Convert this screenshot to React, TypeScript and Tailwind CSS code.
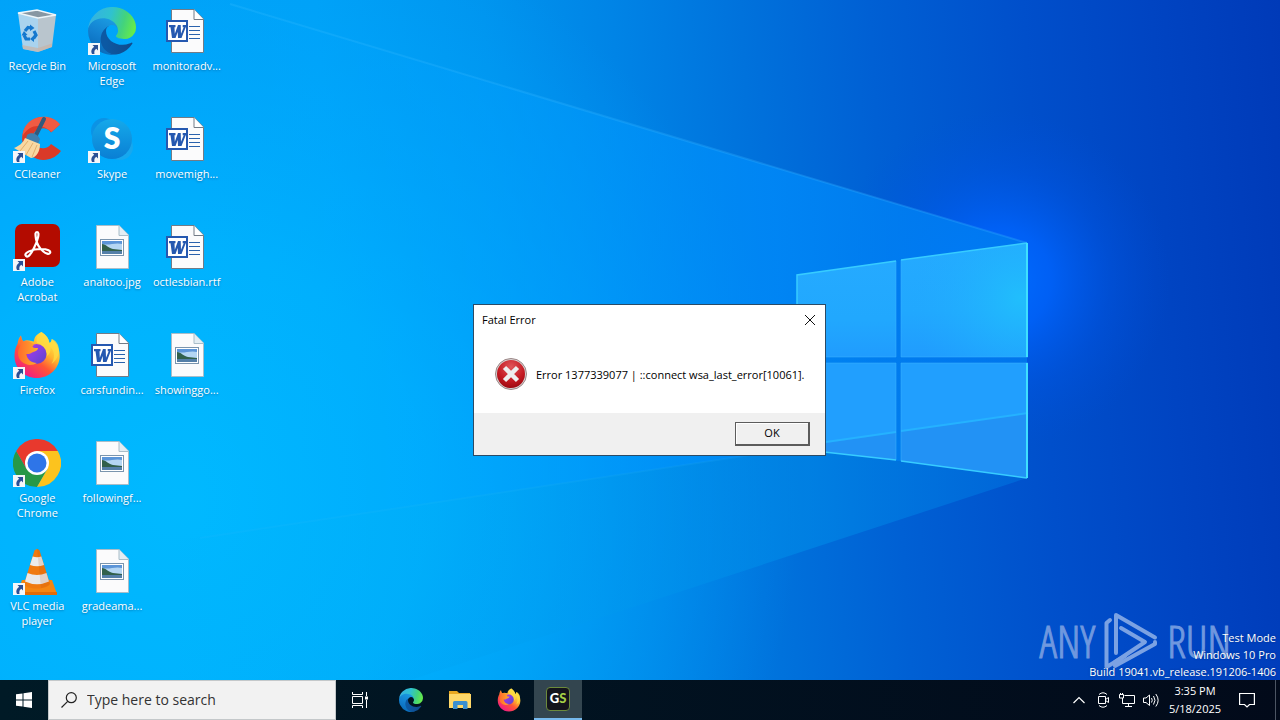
import React from "react";

type Kind = "bin" | "edge" | "word" | "ccleaner" | "skype" | "acrobat" | "jpg" | "firefox" | "chrome" | "vlc";

const desktopItems: { label: string; kind: Kind; shortcut?: boolean }[] = [
  { label: "Recycle Bin", kind: "bin" },
  { label: "CCleaner", kind: "ccleaner", shortcut: true },
  { label: "Adobe Acrobat", kind: "acrobat", shortcut: true },
  { label: "Firefox", kind: "firefox", shortcut: true },
  { label: "Google Chrome", kind: "chrome", shortcut: true },
  { label: "VLC media player", kind: "vlc", shortcut: true },
  { label: "Microsoft Edge", kind: "edge", shortcut: true },
  { label: "Skype", kind: "skype", shortcut: true },
  { label: "analtoo.jpg", kind: "jpg" },
  { label: "carsfundin...", kind: "word" },
  { label: "followingf...", kind: "jpg" },
  { label: "gradeama...", kind: "jpg" },
  { label: "monitoradv...", kind: "word" },
  { label: "movemigh...", kind: "word" },
  { label: "octlesbian.rtf", kind: "word" },
  { label: "showinggo...", kind: "jpg" },
];

function Wallpaper() {
  return (
    <svg className="absolute inset-0 h-full w-full" viewBox="0 0 1280 720" preserveAspectRatio="none" aria-hidden="true">
      <defs>
        <linearGradient id="base" gradientUnits="userSpaceOnUse" x1="0" y1="80" x2="1280" y2="0">
          <stop offset="0" stopColor="#00a2f8" />
          <stop offset=".25" stopColor="#00a0f6" />
          <stop offset=".38" stopColor="#0094ee" />
          <stop offset=".48" stopColor="#0084e6" />
          <stop offset=".58" stopColor="#0072dc" />
          <stop offset=".68" stopColor="#0060d4" />
          <stop offset=".8" stopColor="#004fcb" />
          <stop offset=".9" stopColor="#0044c2" />
          <stop offset="1" stopColor="#003ab8" />
        </linearGradient>
        <radialGradient id="cyan" gradientUnits="userSpaceOnUse" cx="180" cy="500" r="620">
          <stop offset="0" stopColor="#00b9ff" />
          <stop offset=".4" stopColor="#00b6ff" stopOpacity=".8" />
          <stop offset="1" stopColor="#00a4ff" stopOpacity="0" />
        </radialGradient>
        <radialGradient id="glow" gradientUnits="userSpaceOnUse" cx="1000" cy="280" r="170">
          <stop offset="0" stopColor="#006cff" />
          <stop offset=".3" stopColor="#0064ff" stopOpacity=".8" />
          <stop offset=".65" stopColor="#0058ec" stopOpacity=".35" />
          <stop offset="1" stopColor="#0050dc" stopOpacity="0" />
        </radialGradient>
        <linearGradient id="beam" gradientUnits="userSpaceOnUse" x1="200" y1="0" x2="1027" y2="0">
          <stop offset="0" stopColor="#00a8ff" stopOpacity="0" />
          <stop offset=".45" stopColor="#009cff" stopOpacity=".5" />
          <stop offset=".7" stopColor="#008cfc" stopOpacity=".75" />
          <stop offset="1" stopColor="#007cee" stopOpacity=".8" />
        </linearGradient>
        <linearGradient id="low" gradientUnits="userSpaceOnUse" x1="150" y1="0" x2="1027" y2="0">
          <stop offset="0" stopColor="#009ce8" stopOpacity="0" />
          <stop offset=".5" stopColor="#009cee" stopOpacity=".25" />
          <stop offset=".75" stopColor="#008ce8" stopOpacity=".6" />
          <stop offset="1" stopColor="#006cdc" stopOpacity=".7" />
        </linearGradient>
        <linearGradient id="ray" gradientUnits="userSpaceOnUse" x1="230" y1="0" x2="1027" y2="0">
          <stop offset="0" stopColor="#35bdff" stopOpacity=".25" />
          <stop offset="1" stopColor="#2fa8ff" stopOpacity=".35" />
        </linearGradient>
        <linearGradient id="pane" x1="0" x2="0" y1="0" y2="1">
          <stop offset="0" stopColor="#25aaff" />
          <stop offset=".6" stopColor="#21a8fe" />
          <stop offset="1" stopColor="#209cfe" />
        </linearGradient>
        <radialGradient id="shine" gradientUnits="userSpaceOnUse" cx="1020" cy="298" r="110">
          <stop offset="0" stopColor="#21befc" />
          <stop offset="1" stopColor="#21aaff" stopOpacity="0" />
        </radialGradient>
      </defs>
      <rect width="1280" height="720" fill="url(#base)" />
      <rect width="1280" height="720" fill="url(#cyan)" />
      <rect width="1280" height="720" fill="url(#glow)" />
      <path d="M230 4 1027 243V478L797 448 180 540V0Z" fill="url(#beam)" />
      <path d="M180 540 797 448 1027 478 380 690H180Z" fill="url(#low)" />
      <path d="M230 4 1027 243" stroke="url(#ray)" strokeWidth="2" />
      <path d="M200 538 797 448" stroke="#35bdff" strokeOpacity=".12" strokeWidth="2" />
      {/* window panes */}
      <path d="M797 275 896 261V357H797Z" fill="url(#pane)" />
      <path d="M901 260 1028 243V357H901Z" fill="url(#pane)" />
      <path d="M901 260 1028 243V357H901Z" fill="url(#shine)" />
      <path d="M797 363H896V460L797 449Z" fill="#219ffe" />
      <path d="M901 363H1028V478L901 461Z" fill="#219ffe" />
      <path d="M826 442 896 432V460L826 452ZM901 431 1028 413V478L901 461Z" fill="#2292f5" />
      <path d="M826 442 896 432M901 431 1028 413" stroke="#25b2ff" strokeWidth="2" />
      <path d="M896 261V357M901 260V357H1028M797 357H896M797 363H896V460M901 461V363H1028" fill="none" stroke="#3db6ff" strokeOpacity=".5" />
      <path d="M797 357V275L896 261M901 260 1027 243M901 461 1027 478M797 449 896 460" fill="none" stroke="#37ccff" strokeWidth="1.5" />
      <path d="M1027 243V357M1027 363V478" stroke="#3fe0ff" strokeWidth="2" />
    </svg>
  );
}

function EdgeArt() {
  return (
    <svg viewBox="0 0 256 256" className="h-full w-full" aria-hidden="true">
      <defs>
        <linearGradient id="e1" x1=".2" x2="1" y1=".5" y2=".5">
          <stop offset="0" stopColor="#0c59a4" />
          <stop offset="1" stopColor="#114a8b" />
        </linearGradient>
        <linearGradient id="e2" x1=".6" x2=".2" y1="0" y2="1">
          <stop offset="0" stopColor="#1b9de2" />
          <stop offset=".5" stopColor="#1380d0" />
          <stop offset="1" stopColor="#0667b5" />
        </linearGradient>
        <linearGradient id="e3" x1="0" x2="1" y1=".3" y2=".5">
          <stop offset="0" stopColor="#35b0e4" />
          <stop offset=".45" stopColor="#2fc2cf" />
          <stop offset=".75" stopColor="#43d37c" />
          <stop offset="1" stopColor="#66eb4a" />
        </linearGradient>
      </defs>
      <g transform="translate(-4.63 -4.92)">
        <path fill="url(#e1)" d="M235.68 195.46a93.73 93.73 0 01-10.54 4.71 101.87 101.87 0 01-35.9 6.46c-47.32 0-88.54-32.55-88.54-74.32A31.48 31.48 0 01117.13 105c-42.8 1.8-53.8 46.4-53.8 72.53 0 73.88 68.09 81.37 82.76 81.37 7.91 0 19.84-2.3 27-4.56l1.31-.44a128.34 128.34 0 0066.6-52.8 4 4 0 00-5.32-5.64z" />
        <path fill="url(#e2)" d="M110.34 246.34A79.2 79.2 0 0187.6 225a80.72 80.72 0 0129.53-120c3.12-1.47 8.45-4.13 15.54-4a32.35 32.35 0 0125.69 13 31.88 31.88 0 016.36 18.66c0-.21 24.46-79.6-80-79.6-43.9 0-80 41.66-80 78.21a130.15 130.15 0 0012.11 56 128 128 0 00156.38 67.11 75.55 75.55 0 01-62.78-8z" />
        <path fill="url(#e3)" d="M156.94 153.78c-.81 1.05-3.3 2.5-3.3 5.66 0 2.61 1.7 5.12 4.72 7.23 14.38 10 41.49 8.68 41.56 8.68a59.56 59.56 0 0030.27-8.35A61.38 61.38 0 00260.62 114c.26-22.41-8-37.31-11.34-43.91-21.19-41.45-66.93-65.29-116.67-65.29a128 128 0 00-128 126.2c.48-36.54 36.8-66.05 80-66.05 3.5 0 23.46.34 42 10.07 16.34 8.58 24.9 18.94 30.85 29.21 6.18 10.67 7.28 24.15 7.28 29.52s-2.74 13.33-7.8 20.03z" />
      </g>
    </svg>
  );
}

function FirefoxArt() {
  return (
    <svg viewBox="0 0 48 48" className="h-full w-full" aria-hidden="true">
      <defs>
        <linearGradient id="f1" x1=".85" x2=".2" y1=".1" y2=".95">
          <stop offset="0" stopColor="#fff44f" />
          <stop offset=".35" stopColor="#ffb52e" />
          <stop offset=".6" stopColor="#ff5634" />
          <stop offset="1" stopColor="#f0178a" />
        </linearGradient>
        <linearGradient id="f2" x1="0" x2="1" y1="0" y2="1">
          <stop offset="0" stopColor="#b833e1" />
          <stop offset=".5" stopColor="#8140e0" />
          <stop offset="1" stopColor="#5a45c8" />
        </linearGradient>
        <linearGradient id="f3" x1="0" x2="1">
          <stop offset="0" stopColor="#ff6a2c" />
          <stop offset="1" stopColor="#ffae2b" />
        </linearGradient>
      </defs>
      <path fill="url(#f1)" d="M28.5 1C33 4 35.5 7 36.5 12c1.5-.5 2-2 2.3-4C44 12 47 19 46.7 26 46 38 36 47 24 47 11 47 1.5 37 1.5 25c0-5 1-9 3-12C5 9.500 6 6.500 8 4.500c.3 3 1 4.500 2 6C14 8 18 10 21 10.500 21 6 24 3 28.500 1Z" />
      <path fill="#ffdb42" d="M28.500 1c-4 3-6 7-4.500 11 4 1 10 6 10 13 3-2 4-5 3.500-9 5 5 4 12 1 17 6-4 9-12 6.500-19-1.500-3-3-5-6.200-6-.3 2-.8 3.500-2.300 4C35.500 7 33 4 28.500 1Z" opacity=".8" />
      <circle cx="23.500" cy="23" r="10" fill="url(#f2)" />
      <path fill="url(#f3)" d="M8 4.500c.3 3 1 4.500 2.500 6C14 9 18 10.500 21 14c-2 1-2 2.500 1 3h3c0 3-4 3.500-6 4.500-2 2-5 1.500-6 1.500 1 5 5 9 11 9-8 5-19 0-19-10 0-3 1-6 3-8C5.500 10 6.500 7 8 4.500Z" />
    </svg>
  );
}

function PageSheet({ children, stroke }: { children: React.ReactNode; stroke: string }) {
  return (
    <svg viewBox="0 0 48 48" className="h-full w-full" aria-hidden="true">
      <path d="M8.500 2.500H31L40.500 12V45.500H8.500Z" fill="#fbfbfc" stroke={stroke} />
      {children}
    </svg>
  );
}

function Art({ kind }: { kind: Kind }) {
  if (kind === "edge") return <EdgeArt />;
  if (kind === "firefox") return <FirefoxArt />;
  if (kind === "word")
    return (
      <PageSheet stroke="#737b86">
        <path d="M31 2.500V12.500H40.500" fill="#fff" stroke="#737b86" />
        <path d="M26 19.500H37M26 23.500H37M26 27.500H37M26 31.500H37" stroke="#2a62ad" />
        <rect x="4" y="14" width="20" height="20" fill="#fff" stroke="#2558b0" strokeWidth="2" />
        <path d="M6 18h6.500v2.200h-1l.3 6.500 3.200-8.700h2.700l.3 8.700 2.700-6.500h-1V18h4v2.200h-1L18.500 31h-3.500l-.3-6-2.200 6H9L7.500 20.200H6Z" fill="#2558b0" />
      </PageSheet>
    );
  if (kind === "jpg")
    return (
      <PageSheet stroke="#a9bdc9">
        <path d="M31 2.500V12.500H40.500" fill="#e3edf3" stroke="#a9bdc9" />
        <rect x="12.500" y="16.500" width="23" height="16" fill="#fff" stroke="#7b95ae" />
        <rect x="14" y="18" width="20" height="13" fill="#b4d6f3" />
        <path d="M14 18h20v3c-7-2-13 2-20 0Z" fill="#5c95d8" />
        <path d="M14 21c4 0 6 4 11 5l9 1v1H14Z" fill="#31604b" />
        <path d="M14 28h20v3H14Z" fill="#547fa8" />
      </PageSheet>
    );
  if (kind === "bin")
    return (
      <svg viewBox="0 0 48 48" className="h-full w-full" aria-hidden="true">
        <path d="M5 6 25 11 25 45 10 42Z" fill="#a9d3ee" />
        <path d="M25 11 43 8 39 40 25 45Z" fill="#b9c5cd" />
        <path d="M5 6 24 3 43 8 25 11Z" fill="#8797a3" stroke="#eef6fa" strokeWidth="1.500" />
        <path d="M9 38 25 41 39 36.500V40L25 45 10 42Z" fill="#c9b3a6" opacity=".7" />
        <g fill="none" stroke="#1478ce" strokeWidth="3.200">
          <path d="M12 24 15 20.500 18.500 21" />
          <path d="M21 24 23 28 20.500 31.500" />
          <path d="M17 32H13L11 28" />
        </g>
        <path d="M17 17.500 21.500 21 17 24ZM21 28.500V35L17 32ZM8.500 28.500 11 24 14.500 28Z" fill="#1478ce" />
      </svg>
    );
  if (kind === "ccleaner")
    return (
      <svg viewBox="0 0 48 48" className="h-full w-full" aria-hidden="true">
        <path d="M47 9.500A21.500 21.500 0 1 0 48 36L38 29A10 10 0 1 1 38 17.500Z" fill="#da3a28" />
        <path d="M47 9.500C40 0 25-.5 16 7c-4 4-6 8-6.500 14 8-13 20-12 29-4Z" fill="#ef5b43" />
        <path d="M31 4 22 22" stroke="#315a7d" strokeWidth="4" strokeLinecap="round" />
        <path d="M14 20c4-4 11-1 13 4l-2 5-12-5Z" fill="#3f7fae" />
        <path d="M12 23 27 29C27 36 24 42 18 43L1 33C6 31 10 28 12 23Z" fill="#f8d8a2" />
        <path d="M15 26 7 36M20 28 13 40M24 30 19 42" stroke="#e2ae6b" />
      </svg>
    );
  if (kind === "skype")
    return (
      <svg viewBox="0 0 48 48" className="h-full w-full" aria-hidden="true">
        <defs>
          <linearGradient id="sk" x1="0" x2="0" y1="0" y2="1">
            <stop offset="0" stopColor="#15a9ea" />
            <stop offset="1" stopColor="#0a7fd4" />
          </linearGradient>
        </defs>
        <circle cx="16" cy="16" r="13" fill="#0b93e5" />
        <circle cx="32" cy="32" r="13" fill="#16a8ef" />
        <circle cx="24" cy="24" r="20" fill="url(#sk)" />
        <text x="24" y="34" textAnchor="middle" fill="#fff" className="font-[Lato] text-[30px] font-extrabold">S</text>
      </svg>
    );
  if (kind === "acrobat")
    return (
      <svg viewBox="0 0 48 48" className="h-full w-full" aria-hidden="true">
        <rect x="2" y="1" width="45" height="43" rx="7" fill="#b30b00" />
        <path d="M13 33c-3-3 6-7 15-7 7 0 10 2 9 4-2 3-12-3-14-14-.7-5-1-7 1-7 3 0 1 8-3 16-3 6-6 10-8 8Z" fill="none" stroke="#fff" strokeWidth="2.200" strokeLinejoin="round" />
      </svg>
    );
  if (kind === "chrome")
    return (
      <svg viewBox="0 0 48 48" className="h-full w-full" aria-hidden="true">
        <path d="M13.600 30 3.200 12A24 24 0 0 0 24 48L34.400 30 24 24Z" fill="#279847" />
        <path d="M34.400 30 24 48A24 24 0 0 0 44.800 12H24Z" fill="#fcc31e" />
        <path d="M24 12H44.800A24 24 0 0 0 3.200 12L13.600 30 24 24Z" fill="#e8392d" />
        <circle cx="24" cy="24" r="12" fill="#fff" />
        <circle cx="24" cy="24" r="9.500" fill="#2e75e8" />
      </svg>
    );
  return (
    <svg viewBox="0 0 48 48" className="h-full w-full" aria-hidden="true">
      <path d="M9 33H39L44 47H4Z" fill="#f58612" />
      <path d="M4 45H44V48H4Z" fill="#e36b06" />
      <path d="M21.500 3.500Q24 .5 26.500 3.500L37 37C34 43 14 43 11 37Z" fill="#f07a10" />
      <path d="M19.700 9.500Q24 11 28.300 9.500L31 18Q24 20.500 17 18Z" fill="#ececec" />
      <path d="M14.500 26Q24 30 33.500 26L36 34.500Q24 40 12 34.500Z" fill="#e9e9e9" />
      <path d="M24 1.500Q26 2 26.500 3.500L37 37Q34 40 28 41Z" fill="#b34b00" opacity=".15" />
    </svg>
  );
}

function DesktopIcon({ label, kind, shortcut }: { label: string; kind: Kind; shortcut?: boolean }) {
  return (
    <button className="flex h-27 w-full flex-col items-center">
      <span className="relative block size-12">
        <Art kind={kind} />
        {shortcut && (
          <svg viewBox="0 0 12 12" className="absolute bottom-0 left-0 size-3" aria-hidden="true">
            <rect width="12" height="12" fill="#f4f6f9" />
            <path d="M4.500 2H10V7.500L8.300 5.800C6.500 7 6 8.500 6.500 11H4C2.500 8 3.500 5.500 6.200 3.700Z" fill="#2b4f95" />
          </svg>
        )}
      </span>
      <span className="mt-[3px] px-1 text-center text-[11px] leading-[15px] text-white [text-shadow:0_1px_2px_#00407080]">{label}</span>
    </button>
  );
}

function ErrorDialog() {
  return (
    <section
      role="dialog"
      aria-labelledby="dlg-title"
      className="absolute top-[304px] left-[473px] flex w-[353px] flex-col border border-[#2b4b66] bg-white text-[11px] text-black"
    >
      <header className="flex h-[30px] items-center justify-between px-2">
        <h1 id="dlg-title">Fatal Error</h1>
        <button aria-label="Close">
          <svg viewBox="0 0 14 14" className="size-[14px]" fill="none" stroke="#111" aria-hidden="true">
            <path d="M2 2 12 12M12 2 2 12" />
          </svg>
        </button>
      </header>
      <div className="flex h-[78px] items-center gap-2 pl-5">
        <svg viewBox="0 0 34 34" className="size-[34px]" aria-hidden="true">
          <defs>
            <radialGradient id="err" cx=".5" cy=".25" r=".8">
              <stop offset="0" stopColor="#e0565a" />
              <stop offset=".6" stopColor="#c41a22" />
              <stop offset="1" stopColor="#98060e" />
            </radialGradient>
          </defs>
          <circle cx="17" cy="17" r="15.500" fill="#d9d4d4" stroke="#9c8787" />
          <circle cx="17" cy="17" r="14" fill="url(#err)" />
          <path d="M10.500 10.500 23.500 23.500M23.500 10.500 10.500 23.500" stroke="#eeeeee" strokeWidth="4.500" />
        </svg>
        <p className="pt-0.5">Error 1377339077 | ::connect wsa_last_error[10061].</p>
      </div>
      <footer className="flex h-[42px] items-center justify-end bg-[#f0f0f0] pr-[15px]">
        <button className="h-6 w-[75px] border border-r-2 border-b-2 border-[#5c5c5c] bg-[#f0f0f0] text-center shadow-[inset_1px_1px_0_#fff]">OK</button>
      </footer>
    </section>
  );
}

function Watermark() {
  return (
    <div className="absolute right-[49px] bottom-[9px] flex items-center gap-2 font-['Open_Sans_Condensed_Light','Roboto_Condensed','Open_Sans_Condensed',sans-serif] text-[44px] leading-[60px] font-light text-[#6f98df] [-webkit-text-stroke:1px_#6f98df]">
      <span>ANY</span>
      <svg viewBox="0 0 56 60" className="h-[60px] w-14" fill="none" stroke="#7ba2e3" strokeWidth="4" strokeLinejoin="round" strokeLinecap="round" aria-hidden="true">
        <path d="M7 9 3.500 12V56L22 45" />
        <path d="M13 42V4L52 26.500" />
        <path d="M18 17 42 31 12 51V55L52 33V31" />
      </svg>
      <span>RUN</span>
    </div>
  );
}

function Taskbar() {
  return (
    <footer className="relative flex h-10 shrink-0 items-stretch bg-linear-to-r from-[#001a26] to-[#020a1a] text-white">
      <button aria-label="Start" className="flex w-12 items-center justify-center">
        <svg viewBox="0 0 16 16" className="size-4" fill="#fff" aria-hidden="true">
          <path d="M0 2.300 6.500 1.400V7.500H0ZM7.500 1.200 16 0V7.500H7.500ZM0 8.500H6.500V14.600L0 13.700ZM7.500 8.500H16V16L7.500 14.800Z" />
        </svg>
      </button>
      <label className="flex w-72 items-center gap-[10px] border border-[#c4c8ca] bg-[#f2f2f2] pl-3">
        <svg viewBox="0 0 16 16" className="size-4" fill="none" stroke="#222" strokeWidth="1.200" aria-hidden="true">
          <circle cx="10.300" cy="5.700" r="5" />
          <path d="M6.700 9.300.5 15.500" />
        </svg>
        <input aria-label="Search" placeholder="Type here to search" className="min-w-0 flex-1 bg-transparent text-sm outline-none placeholder:text-[#333]" />
      </label>
      <button aria-label="Task View" className="mr-[3px] flex w-12 items-center justify-center">
        <svg viewBox="0 0 18 18" className="size-[18px]" fill="none" stroke="#fff" aria-hidden="true">
          <path d="M1.500 1V3.500H11.500V1M1.500 17V14.500H11.500V17M1.500 5.500H11.500V12.500H1.500ZM15.500 1V5M15.500 9V17" />
          <rect x="14" y="5.500" width="3" height="3" fill="#fff" stroke="none" />
        </svg>
      </button>
      <div className="flex gap-px">
        <button aria-label="Microsoft Edge" className="flex w-12 items-center justify-center">
          <span className="size-6"><EdgeArt /></span>
        </button>
        <button aria-label="File Explorer" className="flex w-12 items-center justify-center">
          <svg viewBox="0 0 24 24" className="size-6" aria-hidden="true">
            <path d="M1 3H9L11 5H22V20H1Z" fill="#e9a820" />
            <path d="M1 6H23V20H1Z" fill="#ffd868" />
            <path d="M5 21V14.500Q5 13 6.500 13H18Q19.500 13 19.500 14.500V21H15V17H9.500V21Z" fill="#3a8fd0" />
          </svg>
        </button>
        <button aria-label="Firefox" className="flex w-12 items-center justify-center">
          <span className="size-6"><FirefoxArt /></span>
        </button>
        <button aria-label="GS" className="flex w-12 items-center justify-center border-b-2 border-[#76b9ed] bg-[#33454f]">
          <span className="flex size-6 items-center justify-center rounded border border-[#6c8a3c] bg-[#14141c] font-[Lato] text-[13px] font-black">
            G<span className="text-[#a5d046]">S</span>
          </span>
        </button>
      </div>
      <div className="ml-auto flex">
        <button aria-label="Show hidden icons" className="flex w-6 items-center justify-center">
          <svg viewBox="0 0 12 8" className="h-2 w-3" fill="none" stroke="#fff" strokeWidth="1.200" aria-hidden="true"><path d="M.5 7 6 1.500 11.500 7" /></svg>
        </button>
        <button aria-label="Meet Now" className="flex w-6 items-center justify-center">
          <svg viewBox="0 0 16 16" className="size-4" fill="none" stroke="#fff" aria-hidden="true">
            <path d="M3.500 4.500H10.500V11.500H3.500ZM10.500 7.500 13.500 5.500V10.500L10.500 8.500M4 2.500Q8-1 12 2.500M4 13.500Q8 17 12 13.500" />
          </svg>
        </button>
        <button aria-label="Network" className="flex w-6 items-center justify-center">
          <svg viewBox="0 0 16 16" className="size-4" fill="none" stroke="#fff" aria-hidden="true">
            <path d="M5.500 3.500H15.500V11.500H3.500V6M9.500 11.500V14.500M6 14.500H13M.5 2.500H4.500V6H.5ZM1.500 2.500V1M3.500 2.500V1" />
          </svg>
        </button>
        <button aria-label="Volume" className="flex w-6 items-center justify-center">
          <svg viewBox="0 0 16 16" className="size-4" fill="none" stroke="#fff" aria-hidden="true">
            <path d="M.5 6V10.500H3L6.500 13.500V3L3 6ZM8.500 6Q10 8.300 8.500 10.500M10.500 4Q13.500 8.300 10.500 12.500M12.800 2Q17.500 8.300 12.800 14.500" />
          </svg>
        </button>
        <button className="flex w-16 flex-col items-center justify-center text-[11px] leading-[18px]">
          <time>3:35 PM</time>
          <time>5/18/2025</time>
        </button>
        <button aria-label="Notifications" className="flex w-10 items-center justify-center">
          <svg viewBox="0 0 16 16" className="size-4" fill="none" stroke="#fff" strokeWidth="1.200" aria-hidden="true">
            <path d="M.6 1.500H15.400V12.500H10.500L8 15 5.500 12.500H.6Z" />
          </svg>
        </button>
        <button aria-label="Show desktop" className="flex w-[13px] justify-end"><span className="h-full w-[5px] border-l border-[#4c5563]" /></button>
      </div>
    </footer>
  );
}

export default function App() {
  return (
    <div className="relative flex h-screen flex-col overflow-hidden bg-[#0078d7] font-['Open_Sans','Noto_Sans',sans-serif]">
      <Wallpaper />
      <main className="relative min-h-0 flex-1">
        <div className="grid w-56 grid-flow-col grid-cols-3 grid-rows-6 pt-[7px]">
          {desktopItems.map((item) => (
            <DesktopIcon key={item.label} {...item} />
          ))}
        </div>
        <Watermark />
        <div className="absolute right-1 bottom-0 text-right text-[11px] leading-[17px] text-white [text-shadow:0_0_2px_#00245080]">
          <p>Test Mode</p>
          <p>Windows 10 Pro</p>
          <p>Build 19041.vb_release.191206-1406</p>
        </div>
        <ErrorDialog />
      </main>
      <Taskbar />
    </div>
  );
}
